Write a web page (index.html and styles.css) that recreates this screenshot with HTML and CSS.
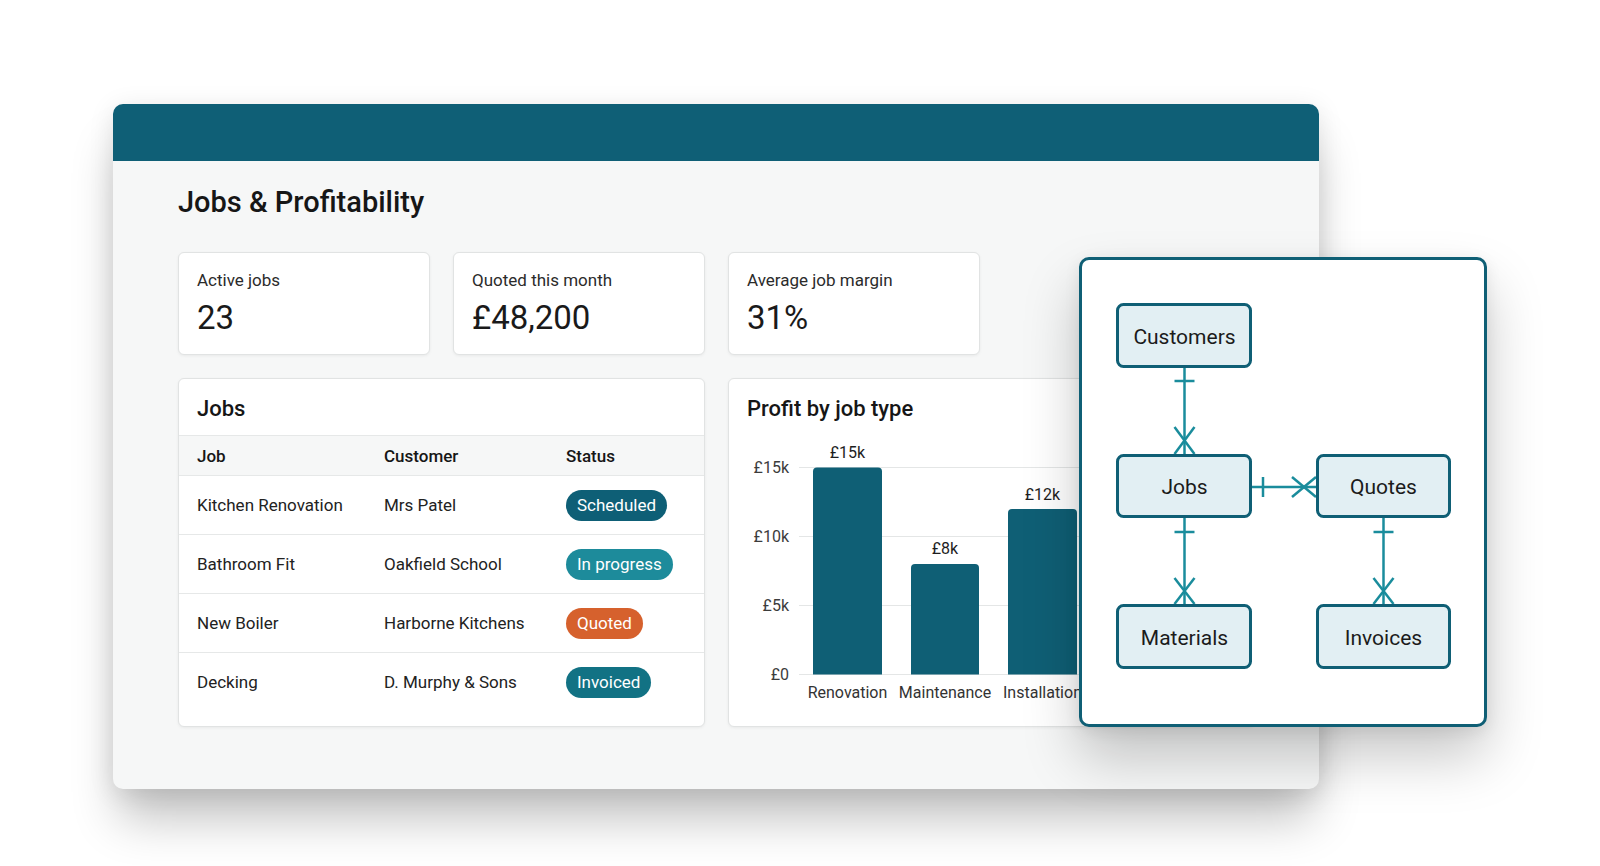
FILE: index.html
```html
<!DOCTYPE html>
<html lang="en">
<head>
  <meta charset="UTF-8">
  <meta name="viewport" content="width=device-width, initial-scale=1.0">
  <title>Jobs &amp; Profitability</title>
  <link rel="stylesheet" href="styles.css">
</head>
<body>
  <div class="stage">
    <section class="window">
      <!-- Top bar -->
      <header class="window-bar"></header>

      <div class="window-body">
        <h1 class="page-title">Jobs &amp; Profitability</h1>

        <div class="dash-grid">
          <!-- Stats -->
          <div class="card stat">
            <div class="stat-label">Active jobs</div>
            <div class="stat-value">23</div>
          </div>
          <div class="card stat">
            <div class="stat-label">Quoted this month</div>
            <div class="stat-value">£48,200</div>
          </div>
          <div class="card stat">
            <div class="stat-label">Average job margin</div>
            <div class="stat-value">31%</div>
          </div>

          <!-- Jobs table -->
          <div class="card jobs">
            <h2 class="card-title">Jobs</h2>
            <div class="jobs-row jobs-head">
              <span>Job</span>
              <span>Customer</span>
              <span>Status</span>
            </div>
            <div class="jobs-row">
              <span>Kitchen Renovation</span>
              <span>Mrs Patel</span>
              <span><span class="badge scheduled">Scheduled</span></span>
            </div>
            <div class="jobs-row">
              <span>Bathroom Fit</span>
              <span>Oakfield School</span>
              <span><span class="badge progress">In progress</span></span>
            </div>
            <div class="jobs-row">
              <span>New Boiler</span>
              <span>Harborne Kitchens</span>
              <span><span class="badge quoted">Quoted</span></span>
            </div>
            <div class="jobs-row">
              <span>Decking</span>
              <span>D. Murphy &amp; Sons</span>
              <span><span class="badge invoiced">Invoiced</span></span>
            </div>
          </div>

          <!-- Profit chart -->
          <div class="card chart">
            <h2 class="card-title">Profit by job type</h2>
            <svg class="chart-svg" width="525" height="291" viewBox="0 0 525 291">
              <g class="grid">
                <line x1="70" y1="32.5" x2="510" y2="32.5"/>
                <line x1="70" y1="101.5" x2="510" y2="101.5"/>
                <line x1="70" y1="170.5" x2="510" y2="170.5"/>
                <line x1="70" y1="239.5" x2="510" y2="239.5"/>
              </g>
              <g class="axis-label">
                <text x="60" y="38">£15k</text>
                <text x="60" y="107">£10k</text>
                <text x="60" y="176">£5k</text>
                <text x="60" y="245">£0</text>
              </g>
              <g class="bar">
                <path d="M84 239.5 V36.5 Q84 32.5 88 32.5 H149 Q153 32.5 153 36.5 V239.5 Z"/>
                <path d="M182 239.5 V133 Q182 129 186 129 H246 Q250 129 250 133 V239.5 Z"/>
                <path d="M279 239.5 V78 Q279 74 283 74 H344 Q348 74 348 78 V239.5 Z"/>
              </g>
              <g class="value-label">
                <text x="118.5" y="23">£15k</text>
                <text x="216" y="119">£8k</text>
                <text x="313.5" y="65">£12k</text>
              </g>
              <g class="cat-label">
                <text x="118.5" y="263">Renovation</text>
                <text x="216" y="263">Maintenance</text>
                <text x="313.5" y="263">Installation</text>
              </g>
            </svg>
          </div>
        </div>
      </div>

      <!-- Data model diagram, floating over the dashboard -->
      <div class="erd">
        <svg width="402" height="464" viewBox="0 0 402 464">
          <g class="link">
            <!-- Customers to Jobs -->
            <line x1="102.5" y1="108" x2="102.5" y2="194"/>
            <line x1="92.5" y1="121" x2="112.5" y2="121"/>
            <line x1="92.5" y1="167" x2="112.5" y2="194"/>
            <line x1="112.5" y1="167" x2="92.5" y2="194"/>
            <!-- Jobs to Quotes -->
            <line x1="170" y1="227" x2="234" y2="227"/>
            <line x1="181" y1="217" x2="181" y2="237"/>
            <line x1="210" y1="217" x2="234" y2="237"/>
            <line x1="210" y1="237" x2="234" y2="217"/>
            <!-- Jobs to Materials -->
            <line x1="102.5" y1="258" x2="102.5" y2="344"/>
            <line x1="92.5" y1="272" x2="112.5" y2="272"/>
            <line x1="92.5" y1="318" x2="112.5" y2="344"/>
            <line x1="112.5" y1="318" x2="92.5" y2="344"/>
            <!-- Quotes to Invoices -->
            <line x1="301.5" y1="258" x2="301.5" y2="344"/>
            <line x1="291.5" y1="272" x2="311.5" y2="272"/>
            <line x1="291.5" y1="318" x2="311.5" y2="344"/>
            <line x1="311.5" y1="318" x2="291.5" y2="344"/>
          </g>
          <g class="entity">
            <rect x="35.5" y="44.5" width="133" height="62" rx="6"/>
            <text x="102.5" y="83.5">Customers</text>
          </g>
          <g class="entity">
            <rect x="35.5" y="195.5" width="133" height="61" rx="6"/>
            <text x="102.5" y="234">Jobs</text>
          </g>
          <g class="entity">
            <rect x="235.5" y="195.5" width="132" height="61" rx="6"/>
            <text x="301.5" y="234">Quotes</text>
          </g>
          <g class="entity">
            <rect x="35.5" y="345.5" width="133" height="62" rx="6"/>
            <text x="102.5" y="384.5">Materials</text>
          </g>
          <g class="entity">
            <rect x="235.5" y="345.5" width="132" height="62" rx="6"/>
            <text x="301.5" y="384.5">Invoices</text>
          </g>
        </svg>
      </div>
    </section>
  </div>
</body>
</html>
```

FILE: styles.css
```css
/* General Styles */
body {
  margin: 0;
  background: #fff;
  font-family: 'Roboto', 'Liberation Sans', sans-serif;
  color: #1b1b1b;
}

.stage {
  height: 866px;
  box-sizing: border-box;
  padding: 104px 0 0 113px;
  overflow: hidden;
}

/* Main window */
.window {
  position: relative;
  width: 1206px;
  height: 685px;
  background: #f6f7f7;
  border-radius: 10px;
  box-shadow: 0 36px 48px -6px rgba(0, 0, 0, 0.24), 0 4px 26px rgba(0, 0, 0, 0.1);
}

.window-bar {
  height: 57px;
  background: #0f5f76;
  border-radius: 10px 10px 0 0;
}

.window-body {
  padding: 22px 64px 0 65px;
}

.page-title {
  margin: 0 0 31px;
  font-size: 29px;
  line-height: 38px;
  font-weight: 500;
  color: #161616;
}

.dash-grid {
  display: grid;
  grid-template-columns: repeat(4, 252px);
  grid-template-rows: 103px 349px;
  gap: 23px;
}

/* Cards */
.card {
  background: #fff;
  border: 1px solid #e1e3e3;
  border-radius: 6px;
  box-shadow: 0 1px 3px rgba(0, 0, 0, 0.06);
  box-sizing: border-box;
}

.stat {
  padding: 17px 18px 0;
}

.stat-label {
  font-size: 17px;
  line-height: 20px;
  color: #2b2b2b;
}

.stat-value {
  margin-top: 8px;
  font-size: 33px;
  line-height: 40px;
  color: #1a1a1a;
}

.jobs,
.chart {
  grid-column: span 2;
  overflow: hidden;
}

.card-title {
  margin: 0;
  padding: 17px 18px 13px;
  font-size: 22px;
  line-height: 26px;
  font-weight: 500;
  color: #161616;
}

/* Jobs table */
.jobs-row {
  display: grid;
  grid-template-columns: 187px 182px 1fr;
  align-items: center;
  height: 59px;
  padding: 0 18px;
  border-bottom: 1px solid #e6e8e8;
  box-sizing: border-box;
  font-size: 17px;
  color: #222;
}

.jobs-row:last-child {
  border-bottom: none;
  height: 58px;
}

.jobs-head {
  height: 41px;
  background: #f6f7f7;
  border-top: 1px solid #e6e8e8;
  font-weight: 500;
  color: #161616;
}

.badge {
  display: inline-block;
  height: 31px;
  line-height: 31px;
  padding: 0 11px;
  border-radius: 16px;
  font-size: 17px;
  color: #fff;
}

.badge.scheduled { background: #0e5f76; }
.badge.progress { background: #1d8b9b; }
.badge.quoted { background: #d6612d; }
.badge.invoiced { background: #127284; }

/* Chart */
.chart-svg {
  display: block;
  font-family: 'Roboto', 'Liberation Sans', sans-serif;
}

.grid line {
  stroke: #e4e6e6;
  stroke-width: 1;
}

.axis-label text {
  font-size: 16px;
  fill: #3c3c3c;
  text-anchor: end;
}

.bar path {
  fill: #0f5f75;
}

.value-label text {
  font-size: 16px;
  fill: #1e1e1e;
  text-anchor: middle;
}

.cat-label text {
  font-size: 16px;
  fill: #333;
  text-anchor: middle;
}

/* Data model panel */
.erd {
  position: absolute;
  left: 966px;
  top: 153px;
  width: 408px;
  height: 470px;
  box-sizing: border-box;
  background: #fff;
  border: 3px solid #0f5f75;
  border-radius: 10px;
  box-shadow: 0 30px 56px rgba(0, 0, 0, 0.22), 0 4px 16px rgba(0, 0, 0, 0.08);
}

.erd svg {
  display: block;
  font-family: 'Roboto', 'Liberation Sans', sans-serif;
}

.link line {
  stroke: #1a8c9c;
  stroke-width: 2.5;
}

.entity rect {
  fill: #e2eff3;
  stroke: #0f5f75;
  stroke-width: 3;
}

.entity text {
  font-size: 21px;
  fill: #1b1b1b;
  text-anchor: middle;
}
```
